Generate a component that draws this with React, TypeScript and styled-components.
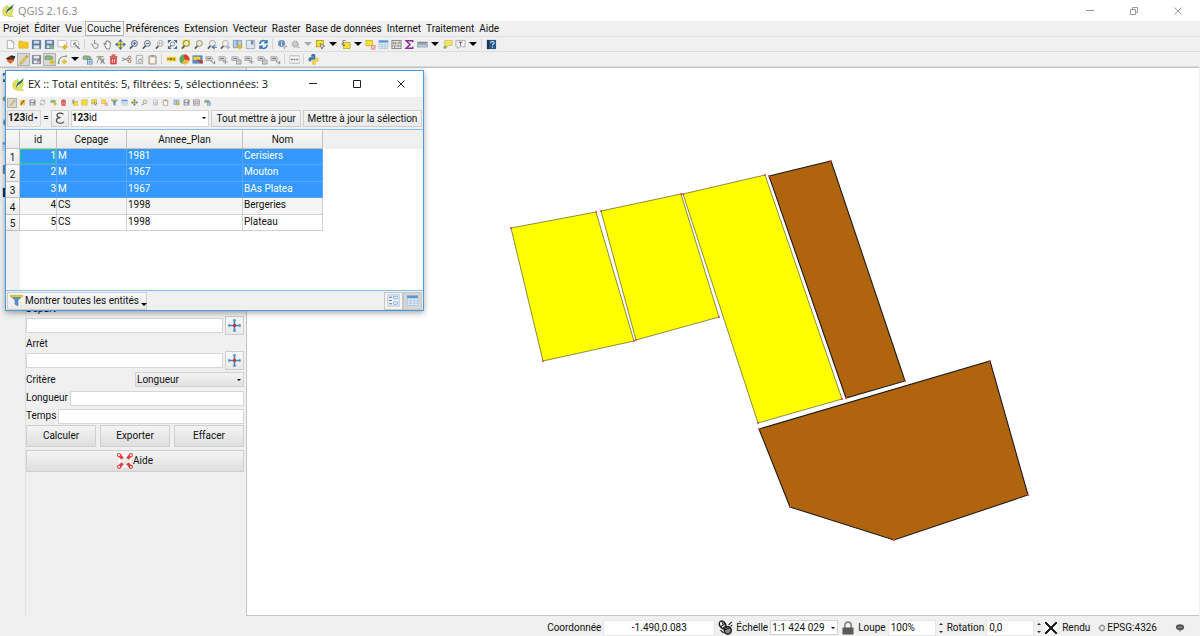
import React from "react";
import styled, { createGlobalStyle, css } from "styled-components";

const ui = `Roboto, "Noto Sans", sans-serif`;
const caption = `"Open Sans", "Noto Sans", sans-serif`;

const GlobalStyle = createGlobalStyle`
  *, *::before, *::after { box-sizing: border-box; }
  body { margin: 0; background: #f0f0f0; }
  button, input, select { font: inherit; color: inherit; margin: 0; }
`;

const Page = styled.div`
  position: relative;
  display: flex;
  flex-direction: column;
  min-height: 100vh;
  font: 10px/14px ${ui};
  color: #111;
  background: #f0f0f0;
  overflow: hidden;
`;

/* ---------- glyphs ---------- */

const lens = (rim: string, fill: string, inner?: React.ReactNode) => (
  <>
    <path d="M5 7.500 L2 10.500" stroke="#555" strokeWidth="1.600" />
    <circle cx="7" cy="4.800" r="3.200" fill={fill} stroke={rim} strokeWidth="1" />
    {inner}
  </>
);

const label = (bg: string, extra?: React.ReactNode) => (
  <>
    <path d="M1 3 h6 l2 2 -2 2 H1z" fill={bg} stroke="#888" strokeWidth=".7" />
    <path d="M2.500 5 h4" stroke="#666" strokeWidth="1" />
    {extra}
  </>
);

const tableGlyph = (head: string, body: string, line: string) => (
  <>
    <rect x="1" y="1.500" width="10" height="9" fill={body} stroke={line} strokeWidth=".6" />
    <rect x="1" y="1.500" width="10" height="2.500" fill={head} />
    <path d="M1 6.200 h10 M1 8.400 h10 M4.300 4 v6.500 M7.700 4 v6.500" stroke={line} strokeWidth=".6" />
  </>
);

const yellowSel = <rect x="1.500" y="1.500" width="7.500" height="7" fill="#f7e12d" stroke="#a08d1c" strokeWidth=".8" />;
const blobGreen = (
  <path d="M1 4.500 C1 1.500 4 2 6 2.200 C9 2.400 10 3 9.500 5 C9 6.500 7 6 5.500 5.800 C3 5.600 1.200 7 1 4.500z" fill="#8fb98a" stroke="#4f7d52" strokeWidth=".7" />
);

const glyphs: Record<string, React.ReactNode> = {
  blank: <path d="M2.500 1.500 h5 l2 2 v7 h-7z M7.500 1.500 v2 h2" fill="#fff" stroke="#999" strokeWidth=".8" />,
  folder: <path d="M1 2.500 h4 l1 1 h5 v6.500 H1z" fill="#f3c81e" stroke="#d9a514" strokeWidth=".6" />,
  save: (
    <>
      <path d="M1.500 1.500 h9 v9 h-9z" fill="#5a7da5" stroke="#3d5c80" strokeWidth=".7" />
      <path d="M3 2 h6 v3 H3z" fill="#cfdcea" />
      <path d="M3 7 h6 v3.500 H3z" fill="#e8e8e0" />
    </>
  ),
  saveAs: (
    <>
      <path d="M1.500 1.500 h9 v9 h-9z" fill="#5a7da5" stroke="#3d5c80" strokeWidth=".7" />
      <path d="M3 2 h6 v3 H3z" fill="#cfdcea" />
      <path d="M3 7 h3 v3 H3z" fill="#e8e8e0" />
      <circle cx="8.500" cy="8.700" r="2.300" fill="#7fb18b" />
    </>
  ),
  composer: (
    <>
      <path d="M1 1.500 h8 l1.500 1.500 v5.500 H1z" fill="#fff" stroke="#aaa" strokeWidth=".8" />
      <path d="M8.500 6 v5.500 M5.800 8.800 h5.500" stroke="#e0b722" strokeWidth="2.400" />
    </>
  ),
  composerMgr: (
    <>
      <path d="M1 1.500 h7 l1.500 1.500 v5.500 H1z" fill="#fff" stroke="#aaa" strokeWidth=".8" />
      <path d="M4 4.500 l6.500 6.500 M6 3.500 l-2.500 2.500" stroke="#777" strokeWidth="1.300" />
    </>
  ),
  touch: <path d="M6 1 v4.500 M3 5.500 l3 5 3.500-1 .5-3.500 -4-1.500 M2.500 5 l2 2" fill="none" stroke="#888" strokeWidth="1" />,
  hand: <path d="M3 7 L2 5 l1-.5 1.200 1.500 V2.500 h1 V2 h1.300 v.5 h1.200 v.7 h1.200 V8 L8 10.800 H5z" fill="#fff" stroke="#555" strokeWidth=".8" />,
  panSel: (
    <>
      <path d="M6 0 L8.500 3 H3.500z M6 12 L8.500 9 H3.500z M0 6 L3 3.500 v5z M12 6 L9 3.500 v5z" fill="#3f6da5" />
      <rect x="3.200" y="3.200" width="5.600" height="5.600" fill="#f3d72c" />
      <path d="M6 2 v8 M2 6 h8" stroke="#3f6da5" strokeWidth=".7" />
    </>
  ),
  zoomIn: lens("#557", "#dbe6f2", <path d="M7 3 v3.600 M5.200 4.800 h3.600" stroke="#356ba8" strokeWidth="1" />),
  zoomOut: lens("#667", "#e4eaf0", <path d="M5.200 4.800 h3.600" stroke="#356ba8" strokeWidth="1" />),
  zoomReal: lens("#aaa", "#eee", <path d="M6 3.500 v2.600 M8 3.500 v2.600" stroke="#999" strokeWidth=".9" />),
  zoomFull: (
    <>
      <path d="M1 1 h4 L1 5z M11 1 h-4 L11 5z M1 11 v-4 L5 11z M11 11 v-4 L7 11z" fill="#3c6ea8" />
      <circle cx="6" cy="5.500" r="2.300" fill="#e6edf5" stroke="#666" strokeWidth=".7" />
      <path d="M4.500 7 L2.500 9.500" stroke="#666" strokeWidth="1.200" />
    </>
  ),
  zoomSel: (
    <>
      <rect x="2.500" y=".8" width="8.500" height="7.200" fill="#f3dc35" />
      {lens("#776", "#f8ef9a")}
    </>
  ),
  zoomLayer: lens("#888", "#f1e9c0"),
  zoomLast: lens("#999", "#eee", <path d="M12 9 H7.500 M9.300 7 L7 9 l2.300 2" stroke="#3f78b8" strokeWidth="1.300" fill="none" />),
  zoomNext: lens("#aaa", "#f2f2f2", <path d="M7 9 h4 M9 7 l2.300 2 -2.300 2" stroke="#9fb2c6" strokeWidth="1.200" fill="none" />),
  bookmarkNew: (
    <>
      <path d="M1.500 1.500 h4 v8 h-4z M6 1.500 h4.500 v8 H6z" fill="#b9cbe0" stroke="#6c8cb0" strokeWidth=".8" />
      <path d="M8.500 6 v5.500 M5.800 8.800 h5.500" stroke="#e0b722" strokeWidth="2.200" />
    </>
  ),
  bookmark: (
    <>
      <path d="M1.500 1.500 h9 v9 h-9z" fill="#dfe6ee" stroke="#8ea4bd" strokeWidth=".9" />
      <path d="M6.500 1.500 h2.500 v5 l-1.200-1 -1.300 1z" fill="#6d8db2" />
    </>
  ),
  refresh: (
    <path d="M2 5.500 A4 4 0 0 1 9.300 3.500 M10 6.500 A4 4 0 0 1 2.700 8.500 M9.800 1 v3 h-3 M2.200 11 v-3 h3" fill="none" stroke="#3579bd" strokeWidth="1.700" />
  ),
  reload: (
    <path d="M2 5.500 A4 4 0 0 1 9.300 3.500 M10 6.500 A4 4 0 0 1 2.700 8.500 M9.800 1 v3 h-3 M2.200 11 v-3 h3" fill="none" stroke="#a8a8a8" strokeWidth="1.400" />
  ),
  identify: (
    <>
      <circle cx="5" cy="5" r="3.800" fill="#5f8fc2" />
      <path d="M5 4.500 v3" stroke="#fff" strokeWidth="1.200" />
      <circle cx="5" cy="3" r=".7" fill="#fff" />
      <path d="M6.500 6 l4.500 2 -2 .7 -.8 2z" fill="#eee" stroke="#777" strokeWidth=".6" />
    </>
  ),
  gear: (
    <>
      <circle cx="5.500" cy="5.500" r="3" fill="#ccc" stroke="#aaa" strokeWidth="2" strokeDasharray="1.500 1" />
      <path d="M7 7 l4 2.500 -2 .5z" fill="#aaa" />
    </>
  ),
  select: (
    <>
      {yellowSel}
      <path d="M5.500 5 l5 3 -2.200 .6 -.8 2.400z" fill="#fff" stroke="#444" strokeWidth=".7" />
    </>
  ),
  selectAll: <rect x="1.500" y="1.500" width="9" height="9" fill="#f5da30" stroke="#c4a928" strokeWidth=".8" />,
  selectExpr: (
    <>
      <rect x="4" y="4" width="7" height="6.500" fill="#f5df33" stroke="#a08d1c" strokeWidth=".6" />
      <path d="M6 1.800 C3 .6 1.800 3.200 4 4 C1.400 4.600 2.200 8 5.500 6.800" fill="none" stroke="#555" strokeWidth="1" />
    </>
  ),
  deselect: (
    <>
      <rect x="1" y="1.500" width="7" height="6" fill="#f7e12d" stroke="#b9a52a" strokeWidth=".7" />
      <rect x="6.500" y="6.500" width="5" height="5" fill="#e88a86" />
      <path d="M7.500 7.500 l3 3 M10.500 7.500 l-3 3" stroke="#fff" strokeWidth=".8" />
    </>
  ),
  table: tableGlyph("#5b9bd5", "#e6eff8", "#9bbbd9"),
  abacus: (
    <>
      <rect x="1" y="1.500" width="10" height="9" fill="#e8e8e8" stroke="#777" strokeWidth=".9" />
      <path d="M1 4.500 h10 M1 7.500 h10" stroke="#888" strokeWidth=".8" />
      <path d="M3 3 v3 M5 3 v3 M8 6 v3" stroke="#b98080" strokeWidth="1.100" />
      <path d="M4 7 v3 M9 2.500 v2" stroke="#7a9a70" strokeWidth="1.100" />
    </>
  ),
  sigma: <path d="M9.500 3.500 V2 H2.500 L6.500 6 L2.500 10 H9.500 V8.500" fill="none" stroke="#8d2f9b" strokeWidth="1.700" />,
  measure: (
    <>
      <rect x=".5" y="3" width="11" height="2.200" fill="#888" />
      <rect x=".5" y="5.800" width="11" height="3" fill="#b9cbe0" stroke="#7890a8" strokeWidth=".6" />
    </>
  ),
  tip: (
    <>
      <path d="M3 1.500 h8 v5.500 H7 L4.500 10 V7 H3z" fill="#f4e36a" stroke="#c7b43c" strokeWidth=".7" />
      <circle cx="3.200" cy="9" r="1.700" fill="#8fae6a" />
    </>
  ),
  text: (
    <>
      <path d="M1 1.500 h10 v7 H5 l-2 2 v-2 H1z" fill="#f7f7f7" stroke="#999" strokeWidth=".8" />
      <path d="M4 3.500 h4 M6 3.500 v3.700" stroke="#555" strokeWidth="1" />
    </>
  ),
  help: (
    <>
      <rect x="1" y="1" width="10" height="10" fill="#2c5a8c" />
      <rect x="1" y="1" width="2.500" height="10" fill="#1c3550" />
      <path d="M5 4.300 C5 2.300 9 2.300 8.800 4.500 C8.600 5.700 7 5.700 7 7.200 M7 8.300 v1.200" fill="none" stroke="#d8e6f5" strokeWidth="1.100" />
    </>
  ),
  edits: (
    <>
      <path d="M1 4.500 L6.500 1.500 11 3.500 9 7.500 3 7z" fill="#5a3524" />
      <path d="M2 8 l5-2.500 3 2 -4 3z" fill="#e2682a" />
      <path d="M7 2 l4 1.500" stroke="#222" strokeWidth="1.500" />
    </>
  ),
  pencil: (
    <>
      <path d="M2.500 9.500 L8.500 2 L10.300 3.500 L4.300 10.500 L2 11z" fill="#e8cf45" stroke="#a8912c" strokeWidth=".6" />
      <path d="M8.500 2 l1.800 1.500 .8-1 -1.700-1.500z" fill="#999" />
    </>
  ),
  pencilRed: (
    <>
      <rect x="1.500" y="2" width="9" height="8.500" fill="#f0c940" />
      <path d="M3 9.500 L9 2" stroke="#8d4a2b" strokeWidth="2" />
    </>
  ),
  saveEdit: (
    <>
      <path d="M1.500 1.500 h9 v9 h-9z" fill="#8195ad" stroke="#667" strokeWidth=".7" />
      <path d="M3 2 h6 v3 H3z M3 7 h6 v3 H3z" fill="#e6e6e6" />
      <path d="M7 9 l3.500-5" stroke="#b26a58" strokeWidth="1.400" />
    </>
  ),
  addFeature: (
    <>
      {blobGreen}
      <path d="M8.700 5.800 v5.500 M6 8.500 h5.500" stroke="#d8bd2c" strokeWidth="2.400" />
    </>
  ),
  addCurve: (
    <>
      <path d="M1.500 10 C2 4.500 5 2 10 2.500" fill="none" stroke="#888" strokeWidth="1.100" />
      <path d="M9 1.500 h2 v2 H9z M.8 9 h2 v2 h-2z" fill="#7ca87a" />
      <path d="M8 5.800 v5.500 M5.300 8.500 h5.500" stroke="#e0c13a" strokeWidth="2.200" />
    </>
  ),
  moveFeature: (
    <>
      {blobGreen}
      <rect x="6" y="6" width="5" height="5" fill="#dfe8f2" stroke="#5c86b4" strokeWidth=".9" />
      <path d="M8.500 6.800 v3.400 M6.800 8.500 h3.400" stroke="#5c86b4" strokeWidth=".8" />
    </>
  ),
  node: (
    <>
      <path d="M2 10 L5 3 L10 9 M1.500 3 h8" fill="none" stroke="#7d8d7d" strokeWidth="1" />
      <path d="M4.500 4.500 L10.500 10.500 M10 5 l-4 5.500" stroke="#8a8a8a" strokeWidth="1.300" />
      <rect x="3.800" y="2" width="2.200" height="2.200" fill="#b7a64c" />
    </>
  ),
  trash: (
    <>
      <path d="M2.500 4 h7 l-.5 7 h-6z" fill="#df4a4a" stroke="#c03030" strokeWidth=".6" />
      <path d="M1.800 3 h8.400 M4.500 2 V1.200 h3 V2" fill="none" stroke="#cc3636" strokeWidth="1.200" />
      <path d="M4.800 5.500 v4 M7.200 5.500 v4" stroke="#fff" strokeWidth=".8" />
    </>
  ),
  cut: (
    <>
      <path d="M1 4 L8 7.300 M1 7.500 L8 4.300" stroke="#888" strokeWidth="1" />
      <circle cx="9.300" cy="3.800" r="1.500" fill="none" stroke="#a96a5a" />
      <circle cx="9.300" cy="7.800" r="1.500" fill="none" stroke="#a96a5a" />
    </>
  ),
  copy: (
    <>
      <path d="M2.500 1.500 h7 v9 h-7z" fill="#efefef" stroke="#999" strokeWidth=".8" />
      <path d="M4 8.500 l3.500-4.500 M5 6 h3.500 v3 H5z" fill="none" stroke="#aaa" strokeWidth=".9" />
    </>
  ),
  paste: (
    <>
      <path d="M2 2 h8 v9 H2z" fill="#cfc3ae" stroke="#a39478" strokeWidth=".8" />
      <path d="M3.500 4 h5 v6 h-5z" fill="#fafafa" />
      <path d="M4.500 1 h3 v2 h-3z" fill="#999" />
    </>
  ),
  labelAbc: (
    <>
      <rect x=".8" y="3" width="10.400" height="5" fill="#f3d52e" />
      <path d="M2 6.500 v-1.500 h1.500 v1.500 M5 4 v2.500 h1.500 v-1.500 h-1.500 M10 5 h-1.700 v1.500 H10" fill="none" stroke="#6d5c12" strokeWidth=".8" />
    </>
  ),
  pie: (
    <>
      <circle cx="6" cy="6" r="5.500" fill="#e8b93a" />
      <path d="M6 6 L5 .6 A5.500 5.500 0 0 0 3 10.600z" fill="#57b060" />
      <path d="M6 6 L5 .6 A5.500 5.500 0 0 1 11.400 7z" fill="#dd3b34" />
    </>
  ),
  labelMap: (
    <>
      <rect x=".5" y="1.500" width="11" height="9" fill="#5c86bd" />
      <rect x="1.500" y="3" width="7.500" height="3.500" fill="#f3d52e" />
      <path d="M6 6 l4.500 4 M8 7.500 h3 v2.500" stroke="#b33c34" strokeWidth="1.500" fill="none" />
    </>
  ),
  labelA: label("#d6d6d6", <path d="M6 7 l4.500 4 M10.500 7.500 v3.500" stroke="#999" strokeWidth="1.300" />),
  labelB: label("#dcdcdc", <path d="M8 6 v5 M5.500 8.500 h5" stroke="#a5a5a5" strokeWidth="1.300" />),
  labelC: label("#e0e0e0", <path d="M6 6.500 h5 v4.500 h-5z" fill="#ccc" stroke="#888" strokeWidth=".7" />),
  csw: (
    <>
      <rect x="0" y="2" width="12" height="8" rx="1" fill="#f5f5f5" stroke="#aaa" strokeWidth=".9" />
      <path d="M2 6 h2 M5 6 h2 M8 6 h2" stroke="#777" strokeWidth="1.500" />
    </>
  ),
  python: (
    <>
      <path d="M6 0 C3 0 3.500 2 3.500 3 h2.800 v.6 H2.300 C0 3.600 0 8.200 2.300 8.200 h1.200 V6.300 h4.500 V2 C8 .5 7.200 0 6 0z" fill="#3a72a8" />
      <path d="M6.500 12 c2.800 0 2.300-2 2.300-3 H6 v-.6 h4 c2.300 0 2.300-4.600 0-4.600 H8.800 v2.500 H4.500 v4 c0 1.300.8 1.700 2 1.700z" fill="#f5cd3c" />
    </>
  ),
  epsilon: <path d="M9 2.800 C6 .8 3 2 3.500 4 C3.700 5.200 5 5.700 6.500 5.700 C4.200 5.700 2.600 6.800 3 8.700 C3.500 11 7.500 11 9.500 9.300" fill="none" stroke="#444" strokeWidth="1" />,
  filter: (
    <>
      <path d="M1 2 h10 L7.300 6 v5 l-2.600-1.500 V6z" fill="#5a8fc4" stroke="#3f6f9f" strokeWidth=".5" />
      <rect x=".5" y="1" width="11" height="1.800" fill="#f2d530" stroke="#a8922a" strokeWidth=".4" />
    </>
  ),
  formView: (
    <>
      <rect x=".8" y=".8" width="10.400" height="10.400" fill="#eaf1f8" stroke="#a5c2df" strokeWidth=".8" />
      <path d="M2 3 h2.500 M2 6 h2.500 M2 9 h2.500" stroke="#667" strokeWidth="1" />
      <path d="M6 2.300 h3.500 v2 H6z M6 7.300 h3.500 v2.200 H6z" fill="#fff" stroke="#8fb2d6" strokeWidth=".9" />
    </>
  ),
  cross: (
    <>
      <path d="M6 .5 v11 M.5 6 h11" stroke="#3c87c8" strokeWidth="1.600" />
      <path d="M4.500 1 h3 M4.500 11 h3 M1 4.500 v3 M11 4.500 v3" stroke="#3c87c8" strokeWidth=".9" />
      <circle cx="6" cy="6" r="1.600" fill="#e0332c" />
    </>
  ),
  lifebuoy: (
    <>
      <circle cx="6" cy="6" r="3.700" fill="none" stroke="#fafafa" strokeWidth="2.200" />
      <path d="M2.200 2.200 l2 2 M9.800 2.200 l-2 2 M2.200 9.800 l2-2 M9.800 9.800 l-2-2" stroke="#e0403c" strokeWidth="2.400" />
      <g fill="none" stroke="#e0403c" strokeWidth=".8">
        <circle cx="1.600" cy="1.600" r="1.200" /><circle cx="10.400" cy="1.600" r="1.200" />
        <circle cx="1.600" cy="10.400" r="1.200" /><circle cx="10.400" cy="10.400" r="1.200" />
      </g>
    </>
  ),
  lock: (
    <>
      <path d="M3.200 6 V3.800 a2.800 2.800 0 0 1 5.600 0 V6" fill="none" stroke="#888" strokeWidth="1.400" />
      <rect x="1.300" y="5.500" width="9.400" height="6" rx=".6" fill="#555" />
      <path d="M1.500 7.500 h9 M1.500 9.500 h9" stroke="#6b6b6b" strokeWidth=".6" />
    </>
  ),
  mouse: (
    <>
      <ellipse cx="3.700" cy="3.900" rx="2.300" ry="3.300" transform="rotate(-35 3.700 3.900)" fill="#fff" stroke="#222" strokeWidth="1.200" />
      <path d="M2 5.500 L5.800 2.500 M3 1.800 l2 2.600 M4 6.500 l2.500-2" stroke="#222" strokeWidth=".9" />
      <ellipse cx="7.800" cy="8.300" rx="2.800" ry="3" fill="#888" stroke="#111" strokeWidth="1.100" />
      <path d="M5 8 l5-2 M8.500 4 l2.500-2.500 M10 5 l1.500-.8 M2 8 l2.500 2.500" stroke="#222" strokeWidth=".9" />
    </>
  ),
  globe: (
    <>
      <circle cx="6" cy="6" r="3.800" fill="#ddd" stroke="#999" strokeWidth="1.800" />
      <path d="M6 0 v12 M0 6 h12" stroke="#999" strokeWidth="1" />
      <circle cx="6" cy="6" r="1.800" fill="#fff" />
    </>
  ),
  bubble: (
    <>
      <path d="M6 1.500 c3 0 5 1.500 5 3.700 s-2 3.600-4 3.600 L5.500 11 V8.800 C3 8.600 1 7.400 1 5.200 S3 1.500 6 1.500z" fill="#555" />
      <path d="M3.500 5.200 h1 M5.500 5.200 h1 M7.500 5.200 h1" stroke="#ddd" strokeWidth="1" />
    </>
  ),
  logo: (
    <>
      <path d="M5.500 1.500 C2 1.500 .8 4.500 .8 7 C.8 10 2.500 11.300 5 11 L7.800 11.800 L10.500 11.500 L8.500 9.500 C10.500 7.500 10.500 4 9.500 2.800 L7.500 5 C7.600 7 7 8 6 8.500 C4 9 3 7.500 3.200 6 C3.400 4.500 4.500 3.500 6 3.800z" fill="#ece25a" stroke="#a8b840" strokeWidth=".5" />
      <path d="M3.500 9 L4.500 5 L11 0 L9.200 4 L6 6.500z" fill="#2b7a3b" />
    </>
  ),
};

const Svg = styled.svg<{ $size: number }>`
  display: block;
  flex: none;
  width: ${(p) => p.$size}px;
  height: ${(p) => p.$size}px;
`;

const Glyph = ({ name, size = 11 }: { name: string; size?: number }) => (
  <Svg $size={size} viewBox="0 0 12 12" fill="none" aria-hidden="true">
    {glyphs[name]}
  </Svg>
);

/* ---------- main window chrome ---------- */

const TitleBar = styled.header`
  display: flex;
  align-items: center;
  gap: 3px;
  height: 21px;
  padding: 0 2px;
  background: #fff;
  color: #8a8a8a;
  font: 11px/20px ${caption};
`;

const Caption = styled.h1`
  flex: 1;
  margin: 0;
  font: inherit;
`;

const WindowButton = styled.button`
  display: flex;
  align-items: center;
  justify-content: center;
  width: 41px;
  height: 100%;
  padding: 0;
  border: 0;
  background: none;
`;

const windowMarks: Record<string, React.ReactNode> = {
  min: <path d="M1 4.500 h8" />,
  max: <path d="M1.500 1.500 h7 v7 h-7z" />,
  restore: <path d="M1.500 3.500 h5 v5 h-5z M3.500 3.500 V1.500 h5 v5 H6.500" />,
  close: <path d="M1.500 1.500 l7 7 M8.500 1.500 l-7 7" />,
};

const WindowButtons = ({ kinds, color }: { kinds: string[]; color: string }) => (
  <>
    {kinds.map((k) => (
      <WindowButton key={k} aria-label={k}>
        <Svg $size={10} viewBox="0 0 10 10" fill="none" stroke={color} strokeWidth="1">
          {windowMarks[k]}
        </Svg>
      </WindowButton>
    ))}
  </>
);

const MenuBar = styled.nav`
  display: flex;
  height: 16px;
  padding-left: 1px;
  border-bottom: 1px solid #e0e0e0;
`;

const MenuItem = styled.button<{ $active?: boolean }>`
  padding: 0 2px 0 1px;
  border: 1px solid ${(p) => (p.$active ? "#b4b4b4" : "transparent")};
  background: ${(p) => (p.$active ? "#f8f8f8" : "none")};
  line-height: 14px;
  white-space: nowrap;
`;

const ToolBar = styled.div`
  display: flex;
  align-items: center;
  height: 15px;
  padding-left: 4px;
  border-bottom: 1px solid #dcdcdc;
`;

const Handle = styled.span<{ $small?: boolean }>`
  width: ${(p) => (p.$small ? 1 : 6)}px;
  height: 10px;
  ${(p) =>
    !p.$small &&
    css`
      background: linear-gradient(#d4d4d4, #d4d4d4) 2px 0 / 1px 100% no-repeat;
    `}
`;

const Tool = styled.button<{ $pressed?: boolean; $width?: number }>`
  display: flex;
  align-items: center;
  justify-content: center;
  width: ${(p) => p.$width ?? 13}px;
  height: 13px;
  padding: 0;
  border: 1px solid ${(p) => (p.$pressed ? "#b0b0b0" : "transparent")};
  background: ${(p) => (p.$pressed ? "#d8d8d8" : "none")};
`;

const Arrow = styled.span<{ $color?: string; $size?: number }>`
  border: ${(p) => p.$size ?? 4}px solid transparent;
  border-top-color: ${(p) => p.$color ?? "#000"};
  border-bottom: 0;
`;

const row1 =
  "blank folder save saveAs composer composerMgr | touch hand panSel zoomIn zoomOut zoomReal zoomFull zoomSel zoomLayer zoomLast zoomNext bookmarkNew bookmark refresh | identify gear dim select v selectExpr v deselect table abacus sigma measure v tip text v | help".split(" ");
const row2 =
  "edits pencil* saveEdit addFeature* addCurve v moveFeature node trash cut copy paste | labelAbc pie labelMap labelA labelB labelC labelB labelC labelA | csw | python".split(" ");
const tableTools =
  "pencil* pencilRed saveEdit reload | addFeature trash | selectExpr selectAll select deselect filter table panSel zoomLayer | copy paste | bookmarkNew saveEdit abacus | moveFeature".split(" ");

const Tools = ({ items, small }: { items: string[]; small?: boolean }) => (
  <>
    {items.map((item, i) => {
      if (item === "|") return <Handle key={i} $small={small} />;
      if (item === "v" || item === "dim")
        return (
          <Tool key={i} $width={12} aria-label="menu">
            <Arrow $color={item === "dim" ? "#aaa" : "#000"} />
          </Tool>
        );
      const name = item.replace("*", "");
      return (
        <Tool key={i} $pressed={item !== name} $width={small ? 10 : 13} aria-label={name}>
          <Glyph name={name} size={small ? 7 : 11} />
        </Tool>
      );
    })}
  </>
);

/* ---------- docked panel ---------- */

const Workspace = styled.main`
  display: flex;
  flex: 1;
`;

const SideBar = styled.aside`
  display: flex;
  flex: 0 0 246px;
  border-top: 1px solid #c4c4c4;
`;

const LayerTools = styled.div`
  display: flex;
  flex-direction: column;
  gap: 12px;
  width: 26px;
  padding: 4px 0 0 2px;
  border-right: 1px solid #e2e2e2;
`;

const Form = styled.form`
  display: flex;
  flex-direction: column;
  flex: 1;
  padding: 232px 2px 0 0;
`;

const FieldLabel = styled.label`
  height: 15px;
  line-height: 17px;
`;

const FieldRow = styled.div<{ $height?: number }>`
  display: flex;
  align-items: center;
  justify-content: space-between;
  gap: 2px;
  height: ${(p) => p.$height ?? 18}px;
`;

const TextBox = styled.input`
  flex: 1;
  min-width: 0;
  height: 15px;
  padding: 0 2px;
  border: 1px solid #d6d6d6;
  background: #fff;
`;

const raised = css`
  border: 1px solid #cdcdcd;
  background: linear-gradient(#f8f8f8, #e9e9e9);
`;

const PickButton = styled.button`
  ${raised}
  display: flex;
  align-items: center;
  justify-content: center;
  width: 19px;
  height: 19px;
  padding: 0;
`;

const SelectWrap = styled.span<{ $width: number; $plain?: boolean }>`
  display: flex;
  align-items: center;
  justify-content: space-between;
  width: ${(p) => p.$width}px;
  height: 15px;
  padding-right: 2px;
  border: 1px solid #d2d2d2;
  background: ${(p) => (p.$plain ? "#fff" : "linear-gradient(#f4f4f4, #e0e0e0)")};
`;

const Select = styled.select`
  flex: 1;
  min-width: 0;
  height: 100%;
  padding: 0 0 0 1px;
  border: 0;
  appearance: none;
  background: none;
`;

const Buttons = styled.div`
  display: grid;
  grid-template-columns: repeat(3, 1fr);
  gap: 3px 4px;
`;

const PushButton = styled.button<{ $wide?: boolean }>`
  display: flex;
  align-items: center;
  justify-content: center;
  grid-column: ${(p) => (p.$wide ? "1 / -1" : "auto")};
  height: 22px;
  padding: 0;
  border: 1px solid #cfcfcf;
  background: linear-gradient(#f4f4f4, #dedede);
`;

/* ---------- map ---------- */

const MapCanvas = styled.section`
  flex: 1;
  margin-right: 1px;
  border: solid #c4c4c4;
  border-width: 1px 0 1px 1px;
  background: #fff;
  svg {
    display: block;
    width: 100%;
  }
`;

const selected = [
  "511,228 596,212 634,341 543,361",
  "601,211 681,194 719,317 636,340",
  "683,194 765,175 842,399 758,423",
];
const parcels = ["769,176 831,161 905,381 846,398", "759,429 990,361 1028,495 894,540 790,507"];
const vertices = [...selected, ...parcels].flatMap((p) => p.split(" ").map((v) => v.split(",").map(Number)));

const ParcelMap = () => (
  <svg viewBox="247 68 952 547" role="img" aria-label="EX">
    {selected.map((p) => (
      <polygon key={p} points={p} fill="#ff0" stroke="#6f6f30" strokeWidth="0.8" />
    ))}
    {parcels.map((p) => (
      <polygon key={p} points={p} fill="#b0640e" stroke="#1c1c1c" strokeWidth="1.100" />
    ))}
    {vertices.map(([x, y]) => (
      <path key={`${x}-${y}`} d={`M${x - 1} ${y - 1} l2 2 M${x + 1} ${y - 1} l-2 2`} stroke="#f04a4a" strokeWidth="0.8" />
    ))}
  </svg>
);

/* ---------- status bar ---------- */

const StatusBar = styled.footer`
  display: flex;
  align-items: center;
  justify-content: flex-end;
  gap: 3px;
  height: 20px;
  padding: 3px 15px 0 0;
  white-space: nowrap;
`;

const StatusField = styled.span`
  display: flex;
  align-items: center;
  gap: 2px;
`;

const StatusInput = styled.input<{ $width: number; $center?: boolean }>`
  width: ${(p) => p.$width}px;
  height: 16px;
  padding: 0 2px;
  border: 1px solid #e6e6e6;
  background: #fff;
  text-align: ${(p) => (p.$center ? "center" : "left")};
`;

const Spinner = styled.span`
  display: flex;
  flex-direction: column;
  gap: 6px;
  padding: 0 1px;
  &::before,
  &::after {
    content: "";
    border: 2px solid transparent;
  }
  &::before {
    border-top: 0;
    border-bottom-color: #333;
  }
  &::after {
    border-bottom: 0;
    border-top-color: #333;
  }
`;

const CheckLabel = styled.label`
  display: flex;
  align-items: center;
  gap: 5px;
  margin-right: 5px;
`;

const CheckBox = styled.input`
  appearance: none;
  width: 12px;
  height: 12px;
  background:
    linear-gradient(45deg, transparent 45%, #222 45% 55%, transparent 55%),
    linear-gradient(-45deg, transparent 45%, #222 45% 55%, transparent 55%), #f8f8f8;
`;

const Projection = styled.button`
  display: flex;
  align-items: center;
  gap: 1px;
  margin-right: 15px;
  padding: 0;
  border: 0;
  background: none;
`;

/* ---------- attribute table window ---------- */

const Dialog = styled.section`
  position: absolute;
  top: 70px;
  left: 5px;
  display: flex;
  flex-direction: column;
  width: 419px;
  height: 241px;
  border: 1px solid #4a9ae0;
  background: #f0f0f0;
  box-shadow: 0 2px 6px rgba(0, 0, 0, 0.35);
`;

const DialogTitle = styled.header`
  display: flex;
  align-items: center;
  gap: 3px;
  height: 26px;
  padding: 0 2px 0 6px;
  background: #fff;
  color: #111;
  font: 11px/24px ${caption};
`;

const DialogTools = styled.div`
  display: flex;
  align-items: center;
  height: 11px;
  padding-left: 1px;
  ${Tool} {
    height: 10px;
  }
`;

const CalcBar = styled.div`
  display: flex;
  align-items: center;
  gap: 2px;
  height: 21px;
  padding: 0 1px 1px;
`;

const FieldPicker = styled.div<{ $grow?: boolean }>`
  display: flex;
  align-items: center;
  flex: ${(p) => (p.$grow ? "1" : "0 0 34px")};
  height: 17px;
  padding: 0 2px 0 0;
  border: 1px solid #d4d4d4;
  background: ${(p) => (p.$grow ? "#fff" : "#eee")};
  ${Select} {
    padding: 0;
  }
`;

const TypeMark = styled.b`
  font-weight: 700;
`;

const ExprButton = styled.button`
  ${raised}
  display: flex;
  align-items: center;
  justify-content: center;
  width: 18px;
  height: 17px;
  padding: 0;
`;

const CalcButton = styled.button<{ $width: number }>`
  ${raised}
  width: ${(p) => p.$width}px;
  height: 17px;
  padding: 0;
  line-height: 15px;
  white-space: nowrap;
`;

const TableArea = styled.div`
  flex: 1;
  border: solid #85bdec;
  border-width: 1px 0;
  background: linear-gradient(to right, #f0f0f0 14px, #fff 14px);
`;

const Table = styled.table`
  width: 100%;
  table-layout: fixed;
  border-collapse: separate;
  border-spacing: 0;
  thead tr {
    height: 19px;
    background: #f0f0f0;
  }
  th {
    padding: 0;
    border: solid #c2c2c2;
    border-width: 0 1px 1px 0;
    background: linear-gradient(#fafafa, #ececec);
    font-weight: 400;
    line-height: 15px;
  }
  thead th:last-child {
    border: 0;
    background: none;
  }
  tbody th {
    padding-top: 2px;
    line-height: 13px;
  }
`;

const Row = styled.tr<{ $selected: boolean; $shaded: boolean }>`
  height: 16px;
  &:nth-child(even) {
    height: 17px;
  }
  td {
    padding: 0 1px;
    border: solid ${(p) => (p.$selected ? "#5aa6f5" : "#d0d0d0")};
    border-width: 0 1px 1px 0;
    background: ${(p) => (p.$selected ? "#3399ff" : p.$shaded ? "#f5f5f5" : "#fff")};
    color: ${(p) => (p.$selected ? "#fff" : "#111")};
    line-height: 14px;
    vertical-align: top;
  }
  td:nth-child(2) {
    padding: 0;
    text-align: right;
  }
  &:first-child td:nth-child(2) {
    box-shadow: inset 0 0 0 1px #26c99a;
  }
  td:last-child {
    border: 0;
    background: none;
  }
`;

const DialogFooter = styled.footer`
  display: flex;
  align-items: center;
  height: 19px;
  padding: 0 1px;
`;

const FilterButton = styled.button`
  ${raised}
  display: flex;
  align-items: center;
  gap: 2px;
  width: 140px;
  height: 18px;
  margin-right: auto;
  padding: 0 2px;
  white-space: nowrap;
  ${Arrow} {
    align-self: flex-end;
    margin-bottom: 3px;
  }
`;

const ViewButton = styled.button<{ $on?: boolean }>`
  display: flex;
  align-items: center;
  justify-content: center;
  width: 19px;
  height: 18px;
  padding: 0;
  border: 1px solid #c6c6c6;
  background: ${(p) => (p.$on ? "#d6d6d6" : "#f5f5f5")};
`;

const rows = [
  [1, "M", "1981", "Cerisiers"],
  [2, "M", "1967", "Mouton"],
  [3, "M", "1967", "BAs Platea"],
  [4, "CS", "1998", "Bergeries"],
  [5, "CS", "1998", "Plateau"],
] as const;

const AttributeTable = () => (
  <Dialog aria-label="EX">
    <DialogTitle>
      <Glyph name="logo" size={13} />
      <Caption>EX :: Total entités: 5, filtrées: 5, sélectionnées: 3</Caption>
      <WindowButtons kinds={["min", "max", "close"]} color="#222" />
    </DialogTitle>
    <DialogTools>
      <Tools items={tableTools} small />
    </DialogTools>
    <CalcBar>
      <FieldPicker>
        <TypeMark>123</TypeMark>
        <Select aria-label="Champ"><option>id</option></Select>
        <Arrow $size={2} />
      </FieldPicker>
      <span>=</span>
      <ExprButton aria-label="Expression"><Glyph name="epsilon" size={14} /></ExprButton>
      <FieldPicker $grow>
        <TypeMark>123</TypeMark>
        <Select aria-label="Valeur"><option>id</option></Select>
        <Arrow $size={2} />
      </FieldPicker>
      <CalcButton $width={90}>Tout mettre à jour</CalcButton>
      <CalcButton $width={119}>Mettre à jour la sélection</CalcButton>
    </CalcBar>
    <TableArea>
      <Table>
        <colgroup>
          <col width="14" /><col width="37" /><col width="70" /><col width="116" /><col width="80" /><col />
        </colgroup>
        <thead>
          <tr><th /><th>id</th><th>Cepage</th><th>Annee_Plan</th><th>Nom</th><th /></tr>
        </thead>
        <tbody>
          {rows.map(([id, cepage, year, name], i) => (
            <Row key={id} $selected={i < 3} $shaded={i % 2 === 1}>
              <th scope="row">{id}</th>
              <td>{id}</td><td>{cepage}</td><td>{year}</td><td>{name}</td><td />
            </Row>
          ))}
        </tbody>
      </Table>
    </TableArea>
    <DialogFooter>
      <FilterButton>
        <Glyph name="filter" size={13} />
        Montrer toutes les entités
        <Arrow $size={3} />
      </FilterButton>
      <ViewButton aria-label="Formulaire"><Glyph name="formView" size={13} /></ViewButton>
      <ViewButton $on aria-label="Table"><Glyph name="table" size={13} /></ViewButton>
    </DialogFooter>
  </Dialog>
);

const menus = ["Projet", "Éditer", "Vue", "Couche", "Préférences", "Extension", "Vecteur", "Raster", "Base de données", "Internet", "Traitement", "Aide"];

export default function App() {
  return (
    <Page>
      <GlobalStyle />
      <TitleBar>
        <Glyph name="logo" size={13} />
        <Caption>QGIS 2.16.3</Caption>
        <WindowButtons kinds={["min", "restore", "close"]} color="#999" />
      </TitleBar>
      <MenuBar>
        {menus.map((m) => (
          <MenuItem key={m} $active={m === "Couche"}>{m}</MenuItem>
        ))}
      </MenuBar>
      <ToolBar><Tools items={row1} /></ToolBar>
      <ToolBar><Tools items={row2} /></ToolBar>
      <Workspace>
        <SideBar>
          <LayerTools>
            {["zoomFull", "addFeature", "identify", "table", "save", "help"].map((n) => (
              <Glyph key={n} name={n} />
            ))}
          </LayerTools>
          <Form onSubmit={(e) => e.preventDefault()}>
            <FieldLabel htmlFor="start">Départ</FieldLabel>
            <FieldRow $height={20}>
              <TextBox id="start" />
              <PickButton type="button" aria-label="Choisir le départ"><Glyph name="cross" size={13} /></PickButton>
            </FieldRow>
            <FieldLabel htmlFor="stop">Arrêt</FieldLabel>
            <FieldRow $height={20}>
              <TextBox id="stop" />
              <PickButton type="button" aria-label="Choisir l'arrêt"><Glyph name="cross" size={13} /></PickButton>
            </FieldRow>
            <FieldRow $height={19}>
              <label htmlFor="criterion">Critère</label>
              <SelectWrap $width={109}>
                <Select id="criterion"><option>Longueur</option></Select>
                <Arrow $size={2} />
              </SelectWrap>
            </FieldRow>
            <FieldRow><label htmlFor="length">Longueur</label><TextBox id="length" /></FieldRow>
            <FieldRow><label htmlFor="time">Temps</label><TextBox id="time" /></FieldRow>
            <Buttons>
              <PushButton type="button">Calculer</PushButton>
              <PushButton type="button">Exporter</PushButton>
              <PushButton type="button">Effacer</PushButton>
              <PushButton type="button" $wide><Glyph name="lifebuoy" size={16} />Aide</PushButton>
            </Buttons>
          </Form>
        </SideBar>
        <MapCanvas><ParcelMap /></MapCanvas>
      </Workspace>
      <StatusBar>
        <StatusField>
          <label htmlFor="coord">Coordonnée</label>
          <StatusInput id="coord" $width={112} $center defaultValue="-1.490,0.083" />
        </StatusField>
        <Glyph name="mouse" size={15} />
        <StatusField>
          <label htmlFor="scale">Échelle</label>
          <SelectWrap $width={68} $plain>
            <Select id="scale"><option>1:1 424 029</option></Select>
            <Arrow $size={2} />
          </SelectWrap>
        </StatusField>
        <Glyph name="lock" size={14} />
        <StatusField>
          <label htmlFor="zoom">Loupe</label>
          <StatusInput id="zoom" $width={48} defaultValue="100%" />
          <Spinner />
        </StatusField>
        <StatusField>
          <label htmlFor="rotation">Rotation</label>
          <StatusInput id="rotation" $width={48} defaultValue="0,0" />
          <Spinner />
        </StatusField>
        <CheckLabel><CheckBox type="checkbox" defaultChecked />Rendu</CheckLabel>
        <Projection><Glyph name="globe" size={8} />EPSG:4326</Projection>
        <Glyph name="bubble" size={10} />
      </StatusBar>
      <AttributeTable />
    </Page>
  );
}
